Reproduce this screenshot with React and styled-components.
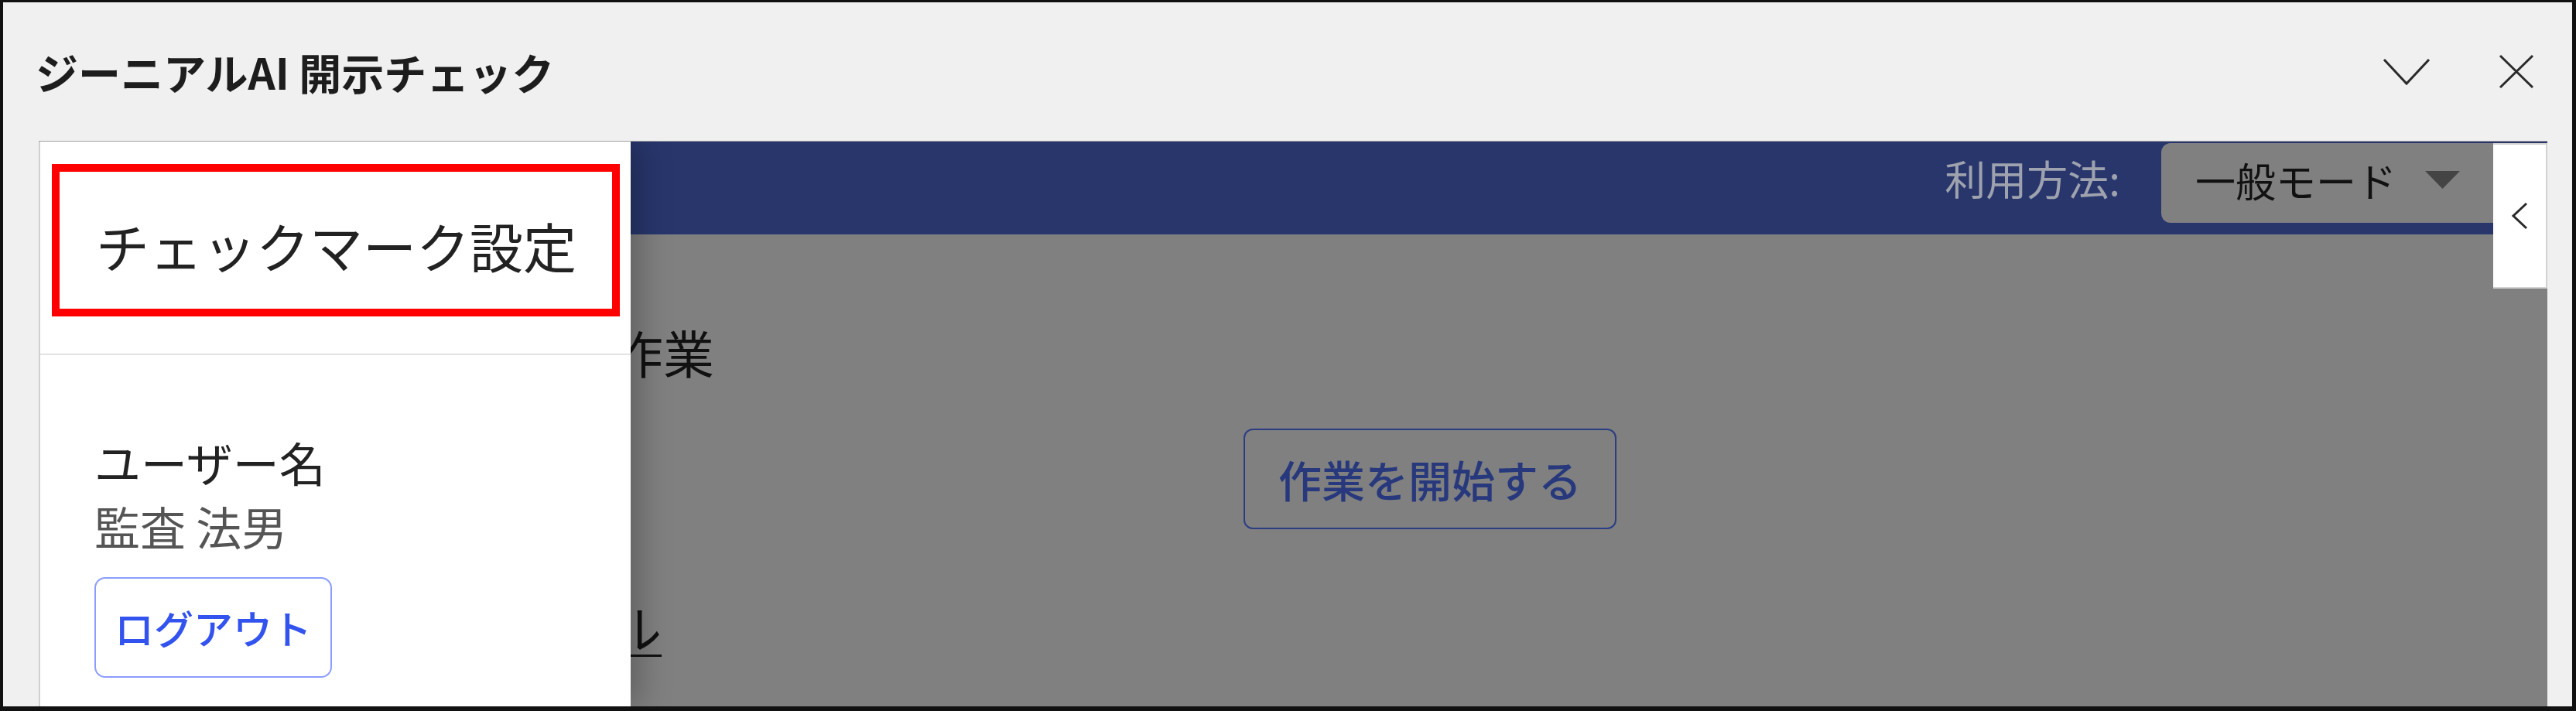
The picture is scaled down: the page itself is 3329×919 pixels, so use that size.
import React from "react";
import styled, { createGlobalStyle } from "styled-components";

const GlobalStyle = createGlobalStyle`
  html, body {
    margin: 0;
    padding: 0;
    overflow: hidden;
    background: #ffffff;
  }
  body {
    font-family: "Noto Sans CJK JP", "Noto Sans", sans-serif;
  }
  * {
    box-sizing: border-box;
  }
`;

const Window = styled.div`
  width: 3329px;
  height: 919px;
  border-style: solid;
  border-color: #111111;
  border-width: 3px 5px 6px 4px;
  background: #f0f0f0;
  display: flex;
  flex-direction: column;
`;

const TitleBar = styled.div`
  height: 179px;
  flex-shrink: 0;
  display: flex;
  align-items: center;
  justify-content: space-between;
  padding: 0 49px 0 42px;
`;

const Title = styled.h1`
  margin: 0;
  font-size: 55px;
  line-height: 1;
  font-weight: 700;
  color: #1d1d1d;
`;

const Controls = styled.div`
  display: flex;
  align-items: center;
  gap: 88px;
`;

const IconButton = styled.button`
  display: flex;
  padding: 0;
  border: 0;
  background: none;
  color: #2a2a2a;
`;

const Body = styled.div`
  flex: 1;
  margin: 0 32px 0 46px;
  position: relative;
  overflow: hidden;
  border-top: 1px solid #a0a0a0;
`;

const Main = styled.div`
  height: 100%;
  display: flex;
  flex-direction: column;
`;

const Header = styled.div`
  height: 120px;
  flex-shrink: 0;
  background: #28366c;
  display: flex;
  justify-content: flex-end;
  align-items: flex-start;
  gap: 53px;
  padding: 2px 50px 0 0;
`;

const ModeLabel = styled.span`
  margin-top: 19px;
  font-size: 53px;
  line-height: 1;
  color: #9ea2ae;
`;

const Select = styled.div`
  width: 449px;
  height: 103px;
  border-radius: 12px;
  background: #808080;
  display: flex;
  align-items: center;
  gap: 37px;
  padding: 0 0 8px 44px;
  font-size: 52px;
  line-height: 1;
  color: #111111;
`;

const SideTab = styled.div`
  position: absolute;
  top: 2px;
  right: 0;
  width: 70px;
  height: 188px;
  background: #ffffff;
  border: 2px solid #d2d2d2;
  border-left: 0;
  display: flex;
  align-items: center;
  justify-content: center;
  z-index: 3;
  color: #2a2a2a;
`;

const Content = styled.div`
  flex: 1;
  background: #808080;
  padding: 118px 0 0 345px;
`;

const Heading = styled.h2`
  margin: 0;
  margin-top: ${(p) => p.$gap || 0}px;
  font-size: 66px;
  line-height: 1;
  font-weight: 400;
  color: #111111;
  text-decoration: ${(p) => (p.$link ? "underline" : "none")};
  text-decoration-thickness: 3px;
  text-underline-offset: 8px;
`;

const ButtonRow = styled.div`
  margin-top: 67px;
  padding-left: 1212px;
`;

const StartButton = styled.button`
  height: 130px;
  padding: 0 43px;
  border: 2px solid #2c3d84;
  border-radius: 12px;
  background: transparent;
  font-family: inherit;
  font-size: 56px;
  font-weight: 500;
  line-height: 1;
  color: #27387c;
`;

const Drawer = styled.aside`
  position: absolute;
  top: 0;
  left: 0;
  bottom: 0;
  width: 765px;
  background: #ffffff;
  border-left: 2px solid #d0d0d0;
  box-shadow: 10px 0 40px rgba(0, 0, 0, 0.28);
  z-index: 2;
  display: flex;
  flex-direction: column;
`;

const DrawerHeader = styled.div`
  height: 276px;
  flex-shrink: 0;
  border-bottom: 2px solid #e2e2e2;
  padding: 29px 14px 0 15px;
`;

const Callout = styled.div`
  height: 197px;
  border: 10px solid #ff0000;
  display: flex;
  align-items: center;
  padding: 13px 0 0 47px;
  font-size: 69px;
  line-height: 1;
  color: #222222;
`;

const DrawerBody = styled.div`
  padding: 108px 0 0 70px;
`;

const UserLabel = styled.div`
  font-size: 60px;
  line-height: 1;
  color: #222222;
`;

const UserName = styled.div`
  margin-top: 23px;
  font-size: 59px;
  line-height: 1;
  color: #555555;
`;

const LogoutButton = styled.button`
  margin-top: 37px;
  height: 130px;
  padding: 0 24px;
  border: 2px solid #8b9dff;
  border-radius: 14px;
  background: #ffffff;
  font-family: inherit;
  font-size: 51px;
  font-weight: 500;
  line-height: 1;
  color: #3353ee;
`;

const ChevronDown = () => (
  <svg width="62" height="36" viewBox="0 0 62 36" fill="none">
    <polyline points="2,2 31,33 60,2" stroke="currentColor" strokeWidth="3" />
  </svg>
);

const CloseIcon = () => (
  <svg width="46" height="45" viewBox="0 0 46 45" fill="none">
    <line x1="2" y1="2" x2="44" y2="43" stroke="currentColor" strokeWidth="3" />
    <line x1="44" y1="2" x2="2" y2="43" stroke="currentColor" strokeWidth="3" />
  </svg>
);

const ChevronLeft = () => (
  <svg width="22" height="36" viewBox="0 0 22 36" fill="none">
    <polyline points="20,2 3,18 20,34" stroke="currentColor" strokeWidth="3" />
  </svg>
);

const Caret = () => (
  <svg width="45" height="23" viewBox="0 0 45 23">
    <polygon points="0,0 45,0 22.5,23" fill="#444444" />
  </svg>
);

export default function App() {
  return (
    <>
      <GlobalStyle />
      <Window>
        <TitleBar>
          <Title>ジーニアルAI 開示チェック</Title>
          <Controls>
            <IconButton aria-label="最小化">
              <ChevronDown />
            </IconButton>
            <IconButton aria-label="閉じる">
              <CloseIcon />
            </IconButton>
          </Controls>
        </TitleBar>
        <Body>
          <Main>
            <Header>
              <ModeLabel>利用方法:</ModeLabel>
              <Select>
                <span>一般モード</span>
                <Caret />
              </Select>
            </Header>
            <Content>
              <Heading>開示チェック作業</Heading>
              <ButtonRow>
                <StartButton>作業を開始する</StartButton>
              </ButtonRow>
              <Heading $gap={92} $link>
                利用マニュアル
              </Heading>
            </Content>
          </Main>
          <SideTab>
            <ChevronLeft />
          </SideTab>
          <Drawer>
            <DrawerHeader>
              <Callout>チェックマーク設定</Callout>
            </DrawerHeader>
            <DrawerBody>
              <UserLabel>ユーザー名</UserLabel>
              <UserName>監査 法男</UserName>
              <LogoutButton>ログアウト</LogoutButton>
            </DrawerBody>
          </Drawer>
        </Body>
      </Window>
    </>
  );
}
